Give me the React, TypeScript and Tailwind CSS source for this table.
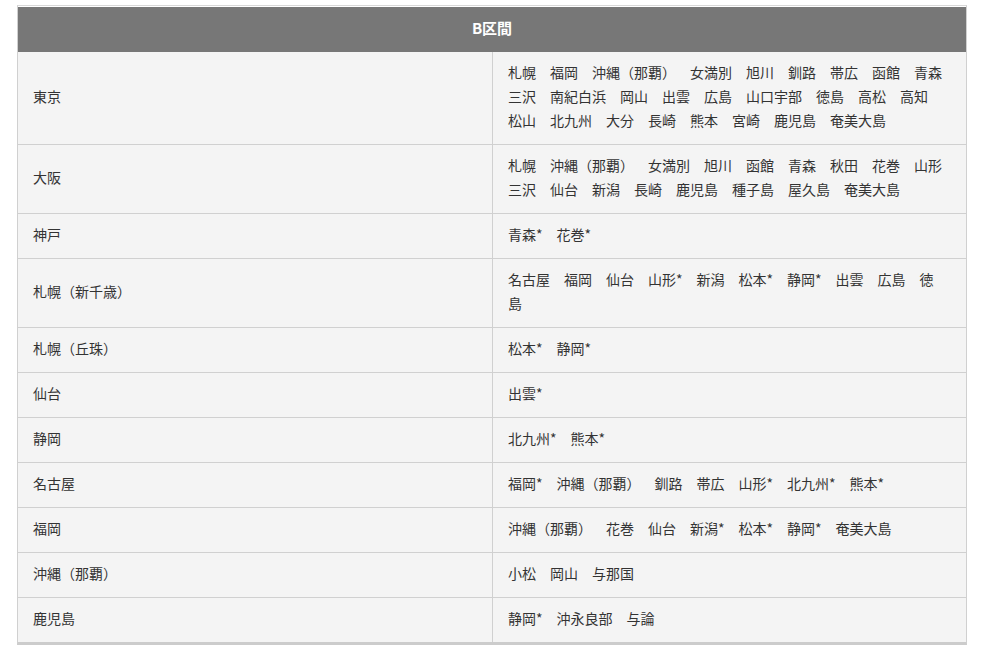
const rows: [string, string][] = [
  [
    "東京",
    "札幌　福岡　沖縄（那覇）　女満別　旭川　釧路　帯広　函館　青森　三沢　南紀白浜　岡山　出雲　広島　山口宇部　徳島　高松　高知　松山　北九州　大分　長崎　熊本　宮崎　鹿児島　奄美大島",
  ],
  [
    "大阪",
    "札幌　沖縄（那覇）　女満別　旭川　函館　青森　秋田　花巻　山形　三沢　仙台　新潟　長崎　鹿児島　種子島　屋久島　奄美大島",
  ],
  ["神戸", "青森*　花巻*"],
  [
    "札幌（新千歳）",
    "名古屋　福岡　仙台　山形*　新潟　松本*　静岡*　出雲　広島　徳島",
  ],
  ["札幌（丘珠）", "松本*　静岡*"],
  ["仙台", "出雲*"],
  ["静岡", "北九州*　熊本*"],
  ["名古屋", "福岡*　沖縄（那覇）　釧路　帯広　山形*　北九州*　熊本*"],
  ["福岡", "沖縄（那覇）　花巻　仙台　新潟*　松本*　静岡*　奄美大島"],
  ["沖縄（那覇）", "小松　岡山　与那国"],
  ["鹿児島", "静岡*　沖永良部　与論"],
];

export default function App() {
  return (
    <div className="min-h-[649px] bg-white pl-[17px] pt-[5px] font-['Noto_Sans_CJK_JP',sans-serif] text-[14px] leading-[24px] text-[#333] [text-spacing-trim:space-all]">
      <table className="w-[950px] table-fixed border-separate border-spacing-0 border-x border-t border-b-[3px] border-x-[#d0d0d0] border-t-[#d8d8d8] border-b-[#cccccc]">
        <thead>
          <tr>
            <th
              colSpan={2}
              className="border-t border-white bg-[#777777] px-[15px] pt-[9px] pb-[12px] text-center text-[15px] font-bold text-white"
            >
              B区間
            </th>
          </tr>
        </thead>
        <tbody>
          {rows.map(([from, to], i) => {
            const last = i === rows.length - 1;
            return (
              <tr key={from}>
                <td
                  className={`w-[471px] bg-[#f4f4f4] px-[15px] pt-[8px] pb-[12px] align-middle ${
                    last ? "" : "border-b border-[#d0d0d0]"
                  }`}
                >
                  {from}
                </td>
                <td
                  className={`border-l border-l-[#d0d0d0] bg-[#f4f4f4] pl-[15px] pr-[21px] pt-[8px] pb-[12px] align-middle break-all ${
                    last ? "" : "border-b border-b-[#d0d0d0]"
                  }`}
                >
                  {to}
                </td>
              </tr>
            );
          })}
        </tbody>
      </table>
    </div>
  );
}
